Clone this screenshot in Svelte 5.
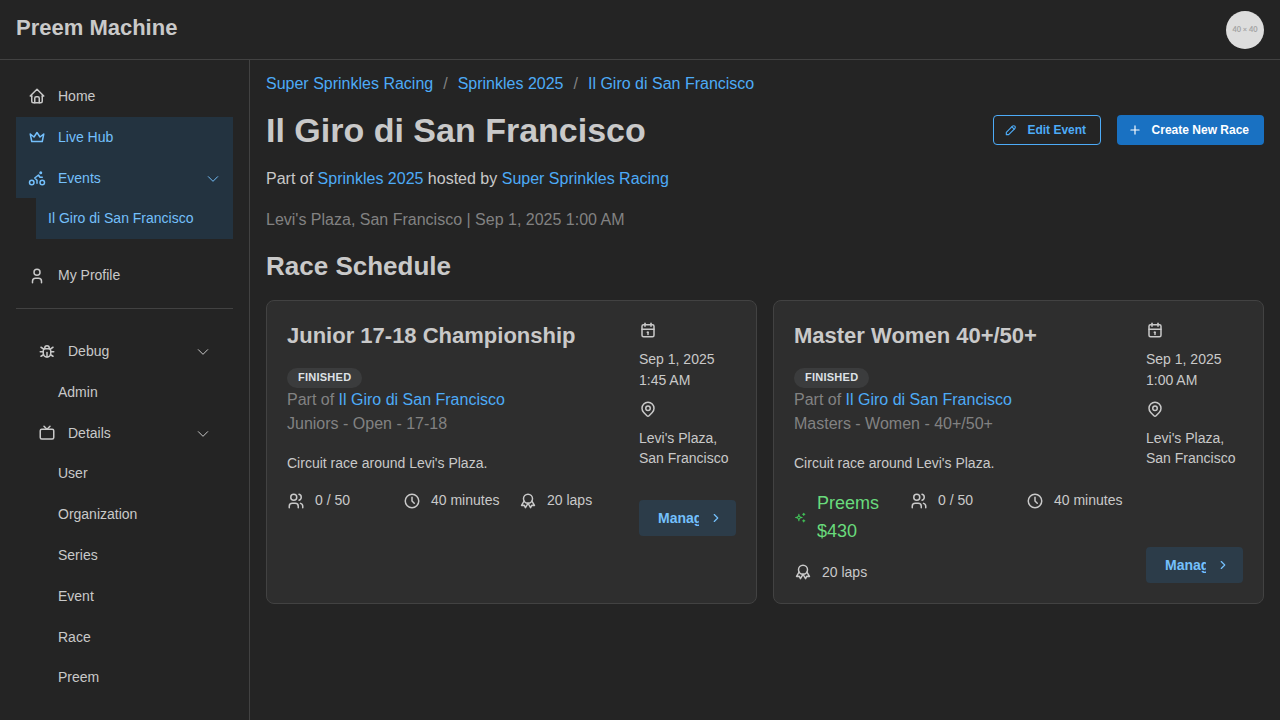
<script>
  const icons = {
    home: ['M5 12l-2 0l9 -9l9 9l-2 0', 'M5 12v7a2 2 0 0 0 2 2h10a2 2 0 0 0 2 -2v-7', 'M9 21v-6a2 2 0 0 1 2 -2h2a2 2 0 0 1 2 2v6'],
    crown: ['M12 6l4 6l5 -4l-2 10h-14l-2 -10l5 4z'],
    bike: ['M2 18a3 3 0 1 0 6 0a3 3 0 1 0 -6 0', 'M16 18a3 3 0 1 0 6 0a3 3 0 1 0 -6 0', 'M12 19v-4l-3 -3l5 -4l2 3h3', 'M16 5a1 1 0 1 0 2 0a1 1 0 1 0 -2 0'],
    user: ['M8 7a4 4 0 1 0 8 0a4 4 0 0 0 -8 0', 'M6 21v-2a4 4 0 0 1 4 -4h4a4 4 0 0 1 4 4v2'],
    bug: ['M9 9v-1a3 3 0 0 1 6 0v1', 'M8 9h8a6 6 0 0 1 1 3v3a5 5 0 0 1 -10 0v-3a6 6 0 0 1 1 -3', 'M3 13h4', 'M17 13h4', 'M12 20v-6', 'M4 19l3.35 -2', 'M20 19l-3.35 -2', 'M4 7l3.75 2.4', 'M20 7l-3.75 2.4'],
    tv: ['M3 9a2 2 0 0 1 2 -2h14a2 2 0 0 1 2 2v9a2 2 0 0 1 -2 2h-14a2 2 0 0 1 -2 -2z', 'M16 3l-4 4l-4 -4'],
    pencil: ['M4 20h4l10.5 -10.5a2.828 2.828 0 1 0 -4 -4l-10.5 10.5v4', 'M13.5 6.5l4 4'],
    plus: ['M12 5v14', 'M5 12h14'],
    users: ['M5 7a4 4 0 1 0 8 0a4 4 0 1 0 -8 0', 'M3 21v-2a4 4 0 0 1 4 -4h4a4 4 0 0 1 4 4v2', 'M16 3.13a4 4 0 0 1 0 7.75', 'M21 21v-2a4 4 0 0 0 -3 -3.85'],
    clock: ['M3 12a9 9 0 1 0 18 0a9 9 0 0 0 -18 0', 'M12 7v5l3 3'],
    award: ['M6 9a6 6 0 1 0 12 0a6 6 0 1 0 -12 0', 'M12 15l3.4 5.89l1.598 -3.233l3.598 .232l-3.4 -5.889', 'M6.802 12l-3.4 5.89l3.598 -.233l1.598 3.232l3.4 -5.889'],
    calendar: ['M4 7a2 2 0 0 1 2 -2h12a2 2 0 0 1 2 2v12a2 2 0 0 1 -2 2h-12a2 2 0 0 1 -2 -2v-12z', 'M16 3v4', 'M8 3v4', 'M4 11h16', 'M11 15h1', 'M12 15v3'],
    pin: ['M9 11a3 3 0 1 0 6 0a3 3 0 0 0 -6 0', 'M17.657 16.657l-4.243 4.243a2 2 0 0 1 -2.827 0l-4.244 -4.243a8 8 0 1 1 11.314 0z'],
    sparkles: ['M16 18a2 2 0 0 1 2 2a2 2 0 0 1 2 -2a2 2 0 0 1 -2 -2a2 2 0 0 1 -2 2zm0 -12a2 2 0 0 1 2 2a2 2 0 0 1 2 -2a2 2 0 0 1 -2 -2a2 2 0 0 1 -2 2zm-7 12a6 6 0 0 1 6 -6a6 6 0 0 1 -6 -6a6 6 0 0 1 -6 6a6 6 0 0 1 6 6z'],
    right: ['M9 6l6 6l-6 6'],
    down: ['M4 8l8 8l8 -8'],
  };

  const nav = [
    { label: 'Home', icon: 'home' },
    { label: 'Live Hub', icon: 'crown', active: true },
    { label: 'Events', icon: 'bike', active: true, open: true },
    { label: 'Il Giro di San Francisco', active: true, child: true },
  ];

  const devNav = [
    { label: 'Debug', icon: 'bug', open: true },
    { label: 'Admin' },
    { label: 'Details', icon: 'tv', open: true },
    { label: 'User' },
    { label: 'Organization' },
    { label: 'Series' },
    { label: 'Event' },
    { label: 'Race' },
    { label: 'Preem' },
  ];

  const races = [
    { name: 'Junior 17-18 Championship', category: 'Juniors - Open - 17-18', time: '1:45 AM' },
    { name: 'Master Women 40+/50+', category: 'Masters - Women - 40+/50+', time: '1:00 AM', preems: '$430' },
  ];
</script>

{#snippet icon(name, size = 18, stroke = 2)}
  <svg class="icon" width={size} height={size} viewBox="0 0 24 24" fill="none" stroke="currentColor" stroke-width={stroke} stroke-linecap="round" stroke-linejoin="round">
    {#each icons[name] as d}<path {d} />{/each}
  </svg>
{/snippet}

{#snippet link(item)}
  <a class="navlink" class:active={item.active} class:child={item.child}>
    {#if item.icon}{@render icon(item.icon)}{/if}
    <span class="label">{item.label}</span>
    {#if item.open}<span class="chev">{@render icon('down', 14, 1.7)}</span>{/if}
  </a>
{/snippet}

<div class="app">
  <header>
    <h3>Preem Machine</h3>
    <div class="avatar">40 × 40</div>
  </header>
  <div class="body">
    <nav>
      {#each nav as item}{@render link(item)}{/each}
      <div class="profile">{@render link({ label: 'My Profile', icon: 'user' })}</div>
      <hr />
      <div class="dev">
        {#each devNav as item}
          <div class:inset={item.icon}>{@render link(item)}</div>
        {/each}
      </div>
    </nav>
    <main>
      <div class="crumbs">
        <a>Super Sprinkles Racing</a><span>/</span><a>Sprinkles 2025</a><span>/</span><a>Il Giro di San Francisco</a>
      </div>
      <div class="titlebar">
        <h1>Il Giro di San Francisco</h1>
        <div class="actions">
          <button class="outline">{@render icon('pencil', 14)}Edit Event</button>
          <button class="filled">{@render icon('plus', 14)}Create New Race</button>
        </div>
      </div>
      <p class="hosted">Part of <a>Sprinkles 2025</a> hosted by <a>Super Sprinkles Racing</a></p>
      <p class="where">Levi's Plaza, San Francisco | Sep 1, 2025 1:00 AM</p>
      <h2>Race Schedule</h2>
      <div class="cards">
        {#each races as race}
          <article>
            <div class="info">
              <h3>{race.name}</h3>
              <span class="badge">FINISHED</span>
              <p class="dim">Part of <a>Il Giro di San Francisco</a></p>
              <p class="dim">{race.category}</p>
              <p class="desc">Circuit race around Levi's Plaza.</p>
              <div class="stats">
                {#if race.preems}
                  <div class="stat preems">{@render icon('sparkles', 13)}<span>Preems {race.preems}</span></div>
                {/if}
                <div class="stat">{@render icon('users')}<span>0 / 50</span></div>
                <div class="stat">{@render icon('clock')}<span>40 minutes</span></div>
                <div class="stat">{@render icon('award')}<span>20 laps</span></div>
              </div>
            </div>
            <div class="side" class:tall={race.preems}>
              <div class="fact">{@render icon('calendar')}<p>Sep 1, 2025<br />{race.time}</p></div>
              <div class="fact">{@render icon('pin')}<p>Levi's Plaza,<br />San Francisco</p></div>
              <button class="manage"><span>Manage</span>{@render icon('right', 14)}</button>
            </div>
          </article>
        {/each}
      </div>
    </main>
  </div>
</div>

<style>
  :global(body) {
    margin: 0;
    background: #242424;
    overflow: hidden;
  }
  * { box-sizing: border-box; }
  .app {
    height: 720px;
    display: flex;
    flex-direction: column;
    font: 16px/24.8px "Liberation Sans", Arial, sans-serif;
    color: #c9c9c9;
  }
  h1, h2, h3, p { margin: 0; }
  .icon { display: block; flex: none; }
  header {
    height: 60px;
    flex: none;
    padding: 0 16px;
    display: flex;
    align-items: center;
    justify-content: space-between;
    border-bottom: 1px solid #424242;
  }
  h3 { font-size: 22px; line-height: 30.8px; font-weight: 700; }
  header h3 { margin-bottom: 2px; }
  .avatar {
    width: 38px;
    height: 38px;
    margin-top: 1px;
    border-radius: 50%;
    background: #ddd;
    color: #a3a3a3;
    display: flex;
    align-items: center;
    justify-content: center;
    font: 700 7.4px/1 Lato, sans-serif;
    white-space: nowrap;
  }
  .body { flex: 1; min-height: 0; display: flex; }
  nav {
    width: 250px;
    flex: none;
    padding: 16px;
    border-right: 1px solid #424242;
  }
  .navlink {
    height: 40.8px;
    padding: 0 12px;
    display: flex;
    align-items: center;
    gap: 12px;
    font-size: 14px;
  }
  .label { flex: 1; }
  .active { background: rgba(34, 139, 230, .15); color: #74c0fc; }
  .child { margin-left: 20px; }
  .chev { margin-right: 1px; padding-top: 2px; }
  .profile { margin-top: 16px; }
  hr { margin: 12px 0 22px; border: 0; height: 1px; background: #424242; }
  .dev { padding-left: 30px; }
  .inset { margin: 0 10px 0 -20px; }
  main { flex: 1; padding: 16px; }
  a { color: #4dabf7; }
  .navlink { color: inherit; }
  .navlink.active { color: #74c0fc; }
  .crumbs { display: flex; line-height: 16px; }
  .crumbs span { margin: 0 10px; color: #828282; }
  .titlebar {
    margin-top: 16px;
    height: 44px;
    display: flex;
    align-items: center;
    justify-content: space-between;
  }
  h1 { font-size: 34px; line-height: 44px; }
  .actions { display: flex; gap: 16px; }
  button {
    height: 30px;
    display: flex;
    align-items: center;
    gap: 9.5px;
    border: 1px solid transparent;
    border-radius: 4px;
    padding: 0 14px 0 10px;
    font: 700 12px/1 "Liberation Sans", Arial, sans-serif;
    white-space: nowrap;
  }
  .outline { background: transparent; border-color: #4dabf7; color: #4dabf7; }
  .filled { background: #1971c2; color: #fff; }
  .hosted { margin-top: 15px; }
  .where { margin-top: 16px; color: #828282; }
  h2 { margin-top: 16px; font-size: 26px; line-height: 35px; }
  .cards { margin-top: 16.4px; display: grid; grid-template-columns: 1fr 1fr; gap: 16px; }
  article {
    height: 304px;
    padding: 20px;
    border: 1px solid #424242;
    border-radius: 8px;
    background: #2e2e2e;
    display: flex;
    align-items: flex-start;
    gap: 20px;
  }
  .info { width: 332px; flex: none; }
  .info h3 { line-height: 29.7px; }
  .badge {
    display: flex;
    align-items: center;
    width: 75px;
    height: 20px;
    margin-top: 17px;
    padding: 0 11px;
    border-radius: 10px;
    background: rgba(134, 142, 150, .15);
    color: #dee2e6;
    font-size: 11px;
    font-weight: 700;
    letter-spacing: .25px;
  }
  .dim { color: #828282; line-height: 24.4px; }
  .desc { margin-top: 16px; font-size: 14px; line-height: 21.7px; }
  .stats { margin-top: 15.5px; display: grid; grid-template-columns: repeat(3, 100px); gap: 16px; }
  .stat { display: flex; gap: 10px; font-size: 14px; line-height: 21.7px; white-space: nowrap; }
  .stat { align-items: center; align-self: start; }
  .preems { color: #69db7c; font-size: 18px; line-height: 27.9px; white-space: normal; }
  .preems .icon { color: #40c057; }
  .side {
    width: 97px;
    height: 215px;
    display: flex;
    flex-direction: column;
    gap: 9.4px;
    font-size: 14px;
    line-height: 20.6px;
  }
  .tall { height: 262px; }
  .fact { display: flex; flex-direction: column; gap: 10px; }
  .manage {
    width: 97px;
    height: 36px;
    margin-top: auto;
    border: 0;
    padding: 0 13px 0 19px;
    gap: 10px;
    font-size: 14px;
    background: rgba(34, 139, 230, .15);
    color: #74c0fc;
  }
  .manage span { width: 41px; overflow: hidden; line-height: 20px; }
</style>
